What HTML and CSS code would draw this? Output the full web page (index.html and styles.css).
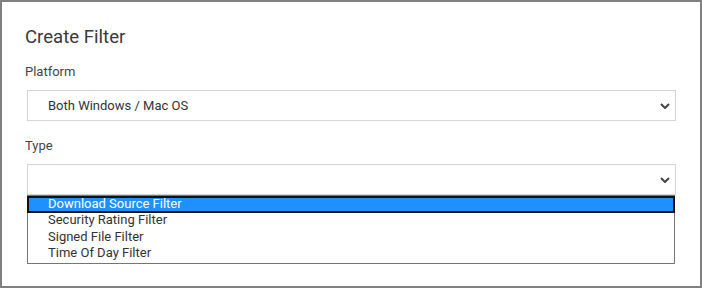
FILE: index.html
```html
<!DOCTYPE html>
<html lang="en">
<head>
<meta charset="utf-8">
<title>Create Filter</title>
<link rel="stylesheet" href="styles.css">
</head>
<body>
<div class="dialog">
  <h1 class="title">Create Filter</h1>
  <div class="field">
    <div class="label">Platform</div>
    <div class="select">
      <span class="value">Both Windows / Mac OS</span>
      <svg class="chev" width="10" height="6" viewBox="0 0 10 6"><polyline points="1,1 5,5 9,1" fill="none" stroke="#444" stroke-width="2"/></svg>
    </div>
  </div>
  <div class="field type">
    <div class="label">Type</div>
    <div class="select-wrap">
      <div class="select">
        <span class="value"></span>
        <svg class="chev" width="10" height="6" viewBox="0 0 10 6"><polyline points="1,1 5,5 9,1" fill="none" stroke="#444" stroke-width="2"/></svg>
      </div>
      <div class="options">
        <div class="option selected">Download Source Filter</div>
        <div class="option">Security Rating Filter</div>
        <div class="option">Signed File Filter</div>
        <div class="option">Time Of Day Filter</div>
      </div>
    </div>
  </div>
</div>
</body>
</html>
```

FILE: styles.css
```css
* { box-sizing: border-box; }
html, body { margin: 0; padding: 0; background: #fff; }
body { font-family: Roboto, "Liberation Sans", sans-serif; color: #333; }

.dialog {
  width: 702px;
  height: 288px;
  border: 2px solid #808080;
  padding: 23px 24px 0 23px;
  background: #fff;
}

.title {
  margin: 0;
  font-size: 18.6px;
  line-height: 24px;
  font-weight: 400;
  color: #3a3a3a;
}

.field { margin-top: 14px; }
.field.type { margin-top: 16px; }

.label {
  font-size: 13px;
  line-height: 17px;
  color: #444;
}

.select-wrap {
  position: relative;
  padding-top: 10px;
}

.select {
  margin-top: 10px;
  margin-left: 2px;
  width: 649px;
  height: 31px;
  border: 1px solid #d4d4d4;
  display: flex;
  align-items: center;
  justify-content: space-between;
  padding: 0 5px 0 20px;
  font-size: 13px;
  color: #333;
}

.select-wrap .select { margin-top: 0; }

.chev { display: block; margin-top: 0; }

.options {
  position: absolute;
  left: 2px;
  top: 41px;
  width: 648px;
  height: 69px;
  border: 1px solid #767676;
  background: #fff;
  display: flex;
  flex-direction: column;
}

.option {
  height: 16.75px;
  line-height: 14px;
  font-size: 13px;
  color: #333;
  padding-left: 20px;
  white-space: nowrap;
}

.option.selected {
  background: #1e90ff;
  color: #fff;
  border: 2px solid #111;
  margin: 0 -1px;
  padding-left: 19px;
  line-height: 11px;
}
```
